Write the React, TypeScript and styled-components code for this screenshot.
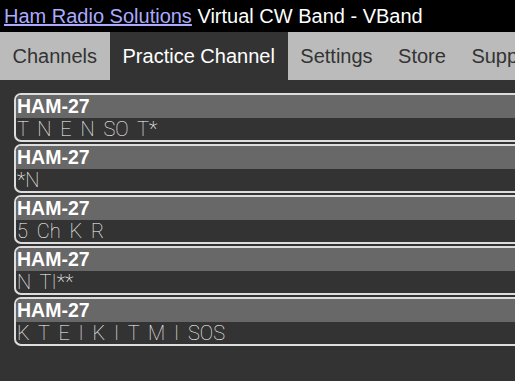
import styled, { createGlobalStyle } from "styled-components";

const GlobalStyle = createGlobalStyle`
  html, body {
    margin: 0;
    padding: 0;
    background: #333333;
    font-family: "Liberation Sans", Arial, sans-serif;
    overflow: hidden;
  }
`;

const Page = styled.div`
  width: 700px;
  min-height: 381px;
  background: #333333;
`;

const TitleBar = styled.div`
  height: 32px;
  background: #000;
  color: #fff;
  font-size: 20px;
  line-height: 32px;
  padding-left: 4px;
  white-space: nowrap;
`;

const TitleLink = styled.a`
  color: #aaaaff;
  text-decoration: underline;
`;

const TabBar = styled.div`
  display: flex;
  height: 48px;
  background: #bbbbbb;
`;

const Tab = styled.div<{ $active?: boolean }>`
  padding: 0 13px 0 12.5px;
  font-size: 20px;
  line-height: 48px;
  white-space: nowrap;
  color: ${(p) => (p.$active ? "#fff" : "#333")};
  background: ${(p) => (p.$active ? "#333" : "#bbb")};
`;

const List = styled.div`
  display: flex;
  flex-direction: column;
  gap: 2px;
  padding: 13px 0 0 14px;
`;

const Card = styled.div`
  border: 2px solid #dddddd;
  border-right: none;
  border-radius: 7px 0 0 7px;
  overflow: hidden;
`;

const CardHeader = styled.div`
  height: 23px;
  background: #686868;
  color: #fff;
  font-weight: bold;
  font-size: 19.5px;
  line-height: 23px;
  padding-left: 1px;
`;

const CardBody = styled.div`
  height: 22px;
  color: #fff;
  font-family: Roboto, sans-serif;
  font-weight: 100;
  font-size: 20px;
  line-height: 22px;
  word-spacing: 4px;
  padding-left: 1px;
  white-space: pre;
`;

const tabs = ["Channels", "Practice Channel", "Settings", "Store", "Support"];

const entries = [
  "T N E N SO T*",
  "*N",
  "5 Ch K R",
  "N TI**",
  "K T E I K I T M I SOS",
];

export default function App() {
  return (
    <Page>
      <GlobalStyle />
      <TitleBar>
        <TitleLink href="#">Ham Radio Solutions</TitleLink> Virtual CW Band - VBand
      </TitleBar>
      <TabBar>
        {tabs.map((t) => (
          <Tab key={t} $active={t === "Practice Channel"}>
            {t}
          </Tab>
        ))}
      </TabBar>
      <List>
        {entries.map((e, i) => (
          <Card key={i}>
            <CardHeader>HAM-27</CardHeader>
            <CardBody>{e}</CardBody>
          </Card>
        ))}
      </List>
    </Page>
  );
}
